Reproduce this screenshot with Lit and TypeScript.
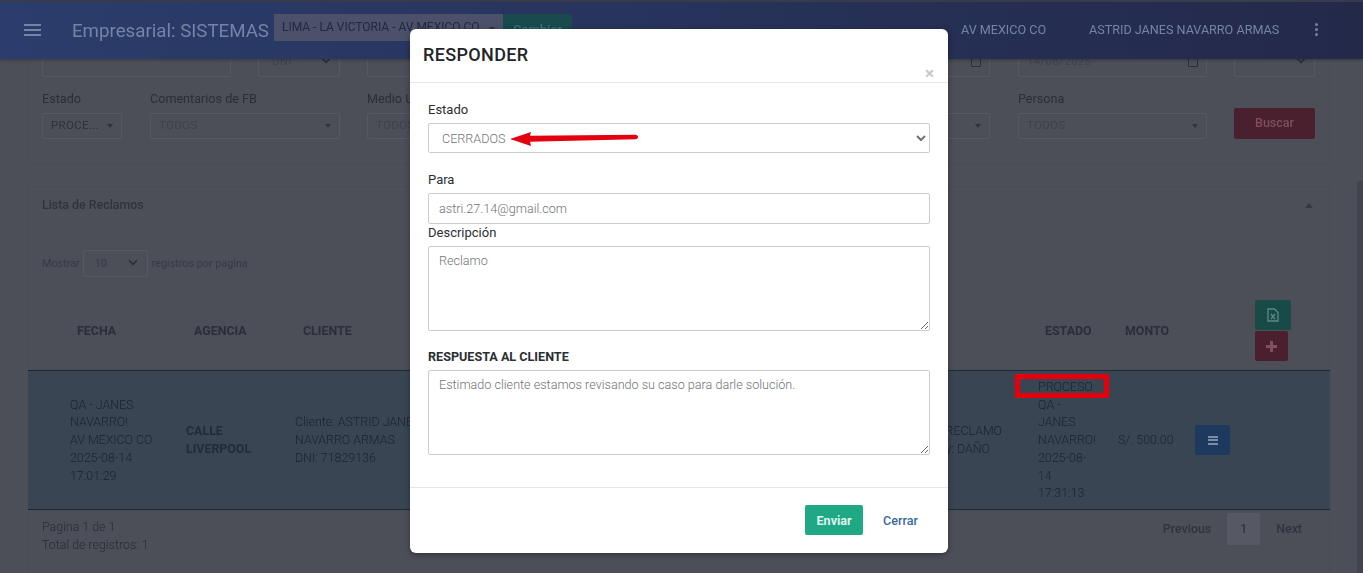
import { LitElement, html, css } from 'lit';
import { customElement } from 'lit/decorators.js';

const caret = html`<span class="caret"></span>`;
const calendar = html`<span class="cal"></span>`;

@customElement('app-root')
export class AppRoot extends LitElement {
  static styles = css`
    :host {
      display: block;
      position: relative;
      height: 573px;
      overflow: hidden;
      background: #4c4f58;
      font-family: Roboto, 'Liberation Sans', sans-serif;
      font-size: 12px;
      color: #2a2e3a;
    }

    .backdrop-page {
      height: 100%;
      display: flex;
      flex-direction: column;
      filter: blur(0.45px);
    }

    .nav {
      flex: none;
      position: relative;
      z-index: 2;
      box-sizing: border-box;
      height: 59px;
      display: flex;
      align-items: center;
      border-top: 2px solid #373b4b;
      background: linear-gradient(90deg, #2b3d6c 0%, #27345c 45%, #24294a 100%);
      box-shadow: 0 1px 3px rgba(0, 0, 0, 0.3);
      color: #7484a6;
    }

    .burger {
      width: 17px;
      height: 12px;
      margin: 0 31px 2px 24px;
      border-top: 2px solid #7484a6;
      border-bottom: 2px solid #7484a6;
      position: relative;
      box-sizing: border-box;
    }

    .burger::after {
      content: '';
      position: absolute;
      left: 0;
      right: 0;
      top: 3px;
      height: 2px;
      background: #7484a6;
    }

    .brand {
      font-size: 18.7px;
      width: 202px;
      white-space: nowrap;
    }

    .agency {
      box-sizing: border-box;
      width: 229px;
      height: 27px;
      padding: 0 8px;
      display: flex;
      align-items: center;
      justify-content: space-between;
      background: #4b5168;
      color: #222842;
      font-size: 12px;
      white-space: nowrap;
      line-height: 23px;
      align-self: flex-end;
      margin-bottom: 18px;
    }

    .agency .caret {
      margin-left: 4px;
    }

    .change {
      width: 69px;
      height: 30px;
      align-self: flex-end;
      margin-bottom: 15px;
      background: #184a4e;
      color: #3f7274;
      font-size: 13px;
      font-weight: 500;
      display: flex;
      align-items: center;
      justify-content: center;
      border-radius: 2px 2px 0 0;
    }

    .nav-right {
      margin-left: auto;
      display: flex;
      align-items: center;
      font-size: 12.6px;
      padding-bottom: 2px;
    }

    .nav-right .place {
      width: 128px;
    }

    .nav-right .user {
      width: 226px;
    }

    .dots {
      display: flex;
      flex-direction: column;
      gap: 2px;
      margin-right: 45px;
    }

    .dots i {
      width: 3px;
      height: 3px;
      border-radius: 50%;
      background: #7484a6;
    }

    .main {
      flex: 1;
      display: flex;
      min-height: 0;
      overflow: hidden;
    }

    .content {
      flex: 1;
      box-sizing: border-box;
      padding: 0 27px 0 28px;
      margin-top: -15px;
    }

    .scrollbar {
      width: 6px;
      margin-top: 122px;
      background: #424550;
    }

    .card {
      border: 1px solid #494c55;
      box-sizing: border-box;
    }

    .filters {
      height: 120px;
      padding: 0 13px;
      display: flex;
      flex-direction: column;
      gap: 14px;
    }

    .filter-row {
      display: flex;
      gap: 27px;
      align-items: flex-end;
    }

    .field-label {
      display: block;
      font-size: 12.6px;
      margin-bottom: 7px;
      line-height: 15px;
    }

    .box {
      box-sizing: border-box;
      height: 26px;
      padding: 0 8px 3px;
      display: flex;
      align-items: center;
      justify-content: space-between;
      border: 1px solid #565962;
      border-radius: 2px;
      color: #3e424b;
      font-size: 11.5px;
      letter-spacing: 0.3px;
      white-space: nowrap;
    }

    .box.tall {
      height: 32px;
      padding-bottom: 0;
    }

    .box .strong {
      color: #2d313b;
    }

    .w80 { width: 80px; margin-right: 1px; }
    .w189 { width: 189px; }
    .w82 { width: 82px; }
    .w81 { width: 81px; }
    .w623 { width: 623px; }

    .caret {
      border: 3px solid transparent;
      border-top: 4px solid #30343b;
      border-bottom: 0;
      margin-top: 3px;
    }

    .cal {
      width: 8px;
      height: 9px;
      border: 1px solid #2c2f38;
      border-radius: 1px;
    }

    .chev {
      width: 6px;
      height: 6px;
      margin: 0 1px 4px 0;
      border-right: 2px solid #2c2f38;
      border-bottom: 2px solid #2c2f38;
      transform: rotate(45deg) scale(0.8);
    }

    .search {
      width: 81px;
      height: 31px;
      background: #4a1f2e;
      color: #80505f;
      border-radius: 2px;
      font-size: 12.5px;
      font-weight: 500;
      display: flex;
      align-items: center;
      justify-content: center;
      padding-bottom: 2px;
      box-sizing: border-box;
    }

    .list {
      margin-top: 22px;
      height: 400px;
    }

    .list-head {
      height: 34px;
      padding: 0 13px;
      display: flex;
      justify-content: space-between;
      align-items: center;
      font-size: 12.4px;
      font-weight: 500;
      color: #303440;
    }

    .up {
      border: 4px solid transparent;
      border-bottom: 5px solid #363943;
      border-top: 0;
      margin: 3px 3px 0 0;
    }

    .show {
      margin-top: 28px;
      height: 28px;
      padding: 0 13px;
      display: flex;
      align-items: center;
      gap: 3px;
      color: #363a45;
      font-size: 10.8px;
    }

    .show .after {
      margin-left: 1px;
    }

    .mini {
      box-sizing: border-box;
      width: 65px;
      height: 27px;
      padding: 0 9px 0 11px;
      display: flex;
      align-items: center;
      justify-content: space-between;
      border: 1px solid #565962;
      border-radius: 2px;
      font-size: 11px;
    }

    .grid-row {
      display: grid;
      grid-template-columns: 139px 109px 665px 77px 87px 75px 1fr;
      align-items: center;
      margin: 0 -1px;
    }

    .thead {
      box-sizing: border-box;
      height: 94px;
      padding-top: 14px;
      border-bottom: 1px solid #1c2838;
      font-weight: 700;
      font-size: 12.4px;
      color: #2a2e3b;
    }

    .thead > div:nth-child(1) { padding-left: 49px; }
    .thead > div:nth-child(2) { padding-left: 27px; }
    .thead > div:nth-child(3) { padding-left: 27px; }
    .thead > div:nth-child(5) { padding-left: 27px; }
    .thead > div:nth-child(6) { padding-left: 20px; }

    .thead .actions {
      display: flex;
      flex-direction: column;
      align-items: flex-start;
      padding-left: 75px;
      gap: 1px;
    }

    .tool {
      width: 33px;
      height: 30px;
      display: flex;
      align-items: center;
      justify-content: center;
      border-radius: 2px;
    }

    .tool.green {
      width: 36px;
      background: #184a48;
    }

    .tool.red {
      background: #4a1f2e;
    }

    .tbody {
      height: 138px;
      background: #3a4553;
      border-bottom: 1px solid #1c2838;
      color: #1a2230;
      font-size: 12.4px;
      font-weight: 300;
      line-height: 17.7px;
    }

    .tbody > div:nth-child(1) { padding-left: 42px; }
    .tbody > div:nth-child(2) { padding-left: 19px; font-weight: 700; color: #232b39; }
    .tbody > div:nth-child(3) { padding-left: 19px; }
    .tbody > div:nth-child(5) { padding: 0 6px 0 20px; }
    .tbody > div:nth-child(6) { padding-left: 13px; }

    .motive {
      text-align: right;
      white-space: nowrap;
    }

    .motive-col {
      justify-self: end;
      margin-right: 16px;
    }

    .menu-btn {
      margin-left: 15px;
      width: 35px;
      height: 30px;
      background: #1d3a5e;
      border-radius: 2px;
      display: flex;
      align-items: center;
      justify-content: center;
    }

    .bars {
      width: 10px;
      height: 9px;
      border-top: 2px solid #7a8da4;
      border-bottom: 2px solid #7a8da4;
      box-sizing: border-box;
      position: relative;
    }

    .bars::after {
      content: '';
      position: absolute;
      left: 0;
      right: 0;
      top: 1.5px;
      height: 2px;
      background: #7a8da4;
    }

    .foot {
      display: flex;
      justify-content: space-between;
      padding: 8px 13px 0;
      color: #272b37;
      font-size: 12.4px;
      font-weight: 300;
      line-height: 18px;
    }

    .pager {
      display: flex;
      align-items: center;
      margin-top: -5px;
      height: 32px;
      gap: 16px;
      font-weight: 500;
      color: #2f3340;
      padding-right: 14px;
    }

    .pager .current {
      width: 33px;
      height: 32px;
      background: #565963;
      display: flex;
      align-items: center;
      justify-content: center;
      border-radius: 2px;
    }

    .highlight {
      position: absolute;
      left: 1015px;
      top: 374px;
      width: 94px;
      height: 24px;
      box-sizing: border-box;
      border: 5px solid #e5000c;
      border-radius: 1px;
      z-index: 3;
    }

    .modal {
      position: absolute;
      z-index: 5;
      left: 410px;
      top: 29px;
      width: 538px;
      height: 524px;
      box-sizing: border-box;
      background: #fff;
      border-radius: 6px;
      box-shadow: 0 2px 6px rgba(0, 0, 0, 0.35);
      color: #212529;
      display: flex;
      flex-direction: column;
    }

    .modal-head {
      height: 54px;
      box-sizing: border-box;
      flex: none;
      border-bottom: 1px solid #e4e6e8;
      display: flex;
      justify-content: space-between;
      padding: 15px 13px 0;
    }

    .modal-head h3 {
      margin: 0;
      font-size: 18px;
      font-weight: 500;
      line-height: 22px;
      letter-spacing: 0.35px;
    }

    .close {
      font-size: 17px;
      line-height: 17px;
      margin: 21px 1px 0 0;
      color: #c8c8c8;
      font-weight: 700;
    }

    .modal-body {
      flex: 1;
      padding: 19px 18px 0;
      border-bottom: 1px solid #e4e6e8;
    }

    label {
      display: block;
      font-size: 13px;
      line-height: 16px;
      color: #2b2e33;
    }

    .select-wrap {
      position: relative;
      margin-top: 5px;
    }

    select,
    input,
    textarea {
      box-sizing: border-box;
      display: block;
      width: 502px;
      border: 1px solid #c9ccd0;
      border-radius: 2px;
      background: #fff;
      color: #6f7377;
      font-family: Roboto, 'Liberation Sans', sans-serif;
      font-size: 12.6px;
      font-weight: 300;
      outline: none;
      margin: 0;
    }

    select {
      height: 30px;
      padding-left: 9px;
    }

    input {
      height: 31px;
      padding: 0 10px;
    }

    textarea {
      height: 85px;
      padding: 6px 10px;
      line-height: 16px;
    }

    .arrow {
      position: absolute;
      left: 81px;
      top: 5px;
    }

    .para {
      margin-top: 19px;
    }

    .para input,
    .desc textarea,
    .answer textarea {
      margin-top: 5px;
    }

    .desc label {
      padding-top: 1px;
    }

    .answer {
      margin-top: 18px;
    }

    .answer label {
      font-weight: 700;
      font-size: 12.6px;
    }

    .modal-foot {
      flex: none;
      height: 65px;
      box-sizing: border-box;
      padding: 17px 30px 0 0;
      display: flex;
      justify-content: flex-end;
      gap: 20px;
    }

    .send {
      width: 58px;
      height: 30px;
      background: #1ea884;
      border-radius: 2px;
      color: #dff5ef;
      font-size: 12.6px;
      font-weight: 700;
      display: flex;
      align-items: center;
      justify-content: center;
    }

    .cerrar {
      height: 30px;
      display: flex;
      align-items: center;
      color: #3a6a9b;
      font-size: 12.6px;
      font-weight: 500;
    }
  `;

  render() {
    return html`
      <div class="backdrop-page">
        <header class="nav">
          <div class="burger"></div>
          <div class="brand">Empresarial: SISTEMAS</div>
          <div class="agency"><span>LIMA - LA VICTORIA - AV MEXICO CO</span>${caret}</div>
          <div class="change">Cambiar</div>
          <div class="nav-right">
            <span class="place">AV MEXICO CO</span>
            <span class="user">ASTRID JANES NAVARRO ARMAS</span>
            <span class="dots"><i></i><i></i><i></i></span>
          </div>
        </header>
        <div class="main">
          <div class="content">
            <section class="card filters">
              <div class="filter-row">
                <div class="box tall w189"></div>
                <div class="box tall w82"><span style="margin-left:5px">DNI</span><span class="chev"></span></div>
                <div class="box tall w623" style="justify-content:flex-end">${calendar}</div>
                <div class="box tall w189" style="margin-left:1px"><span>14/08/2025</span>${calendar}</div>
                <div class="box tall w81" style="justify-content:flex-end"><span class="chev"></span></div>
              </div>
              <div class="filter-row">
                <div>
                  <span class="field-label">Estado</span>
                  <div class="box w80"><span class="strong">PROCE...</span>${caret}</div>
                </div>
                <div>
                  <span class="field-label">Comentarios de FB</span>
                  <div class="box" style="width:190px"><span>TODOS</span>${caret}</div>
                </div>
                <div>
                  <span class="field-label">Medio U</span>
                  <div class="box w623"><span>TODOS</span>${caret}</div>
                </div>
                <div style="margin-left:1px">
                  <span class="field-label">Persona</span>
                  <div class="box w189"><span>TODOS</span>${caret}</div>
                </div>
                <div class="search">Buscar</div>
              </div>
            </section>

            <section class="card list">
              <div class="list-head"><span>Lista de Reclamos</span><span class="up"></span></div>
              <div class="show">
                <span>Mostrar</span>
                <div class="mini"><span>10</span><span class="chev"></span></div>
                <span class="after">registros por pagina</span>
              </div>
              <div class="grid-row thead">
                <div>FECHA</div>
                <div>AGENCIA</div>
                <div>CLIENTE</div>
                <div></div>
                <div>ESTADO</div>
                <div>MONTO</div>
                <div class="actions">
                  <div class="tool green">
                    <svg width="12" height="14" viewBox="0 0 12 14" fill="none" stroke="#5f8886" stroke-width="1.3">
                      <path d="M1 1h6.5L11 4.5V13H1z" />
                      <path d="M4 6l4 5M8 6l-4 5" />
                    </svg>
                  </div>
                  <div class="tool red">
                    <svg width="11" height="11" viewBox="0 0 11 11" fill="#80505f"><path d="M4 0h3v4h4v3H7v4H4V7H0V4h4z" /></svg>
                  </div>
                </div>
              </div>
              <div class="grid-row tbody">
                <div>QA - JANES<br />NAVARRO!<br />AV MEXICO CO<br />2025-08-14<br />17:01:29</div>
                <div>CALLE<br />LIVERPOOL</div>
                <div>Cliente: ASTRID JANES<br />NAVARRO ARMAS<br />DNI: 71829136</div>
                <div class="motive-col"><div class="motive">RECLAMO<br /><span style="margin-right:12px">y: DAÑO</span></div></div>
                <div>PROCESO<br />QA -<br />JANES<br />NAVARRO!<br />2025-08-<br />14<br />17:31:13</div>
                <div>S/. 500.00</div>
                <div><div class="menu-btn"><span class="bars"></span></div></div>
              </div>
              <div class="foot">
                <div>Pagina 1 de 1<br />Total de registros: 1</div>
                <div class="pager"><span>Previous</span><span class="current">1</span><span>Next</span></div>
              </div>
            </section>
          </div>
          <div class="scrollbar"></div>
        </div>
      </div>

      <div class="highlight"></div>

      <div class="modal">
        <div class="modal-head">
          <h3>RESPONDER</h3>
          <span class="close">×</span>
        </div>
        <div class="modal-body">
          <label>Estado</label>
          <div class="select-wrap">
            <select><option>CERRADOS</option></select>
            <svg class="arrow" width="132" height="20" viewBox="0 0 132 20">
              <path d="M1 11 L22 4 L21 7.8 L127 6.8 Q131.5 9 127 11.2 L21 13.8 L22 18 Z" fill="#e3000f" />
            </svg>
          </div>
          <div class="para">
            <label>Para</label>
            <input .value=${'astri.27.14@gmail.com'} />
          </div>
          <div class="desc">
            <label>Descripción</label>
            <textarea .value=${'Reclamo'}></textarea>
          </div>
          <div class="answer">
            <label>RESPUESTA AL CLIENTE</label>
            <textarea .value=${'Estimado cliente estamos revisando su caso para darle solución.'}></textarea>
          </div>
        </div>
        <div class="modal-foot">
          <div class="send">Enviar</div>
          <div class="cerrar">Cerrar</div>
        </div>
      </div>
    `;
  }
}
